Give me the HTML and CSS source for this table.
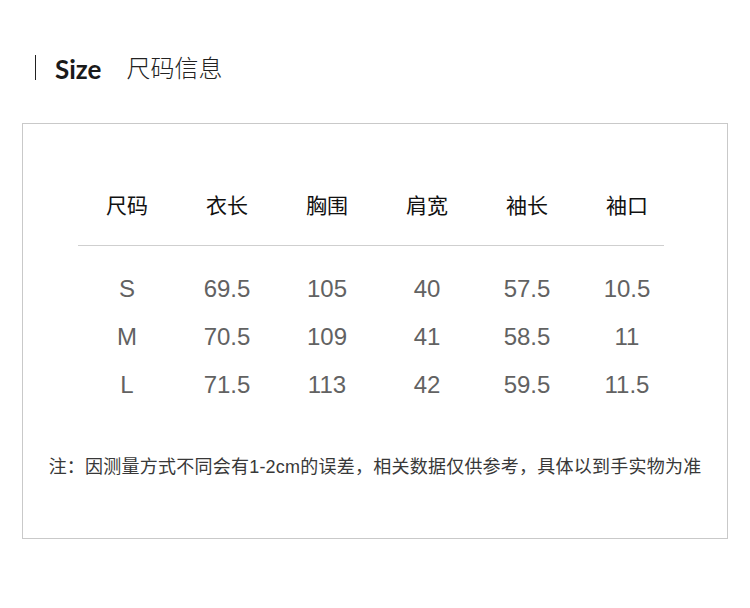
FILE: index.html
```html
<!DOCTYPE html>
<html lang="zh-CN">
<head>
<meta charset="utf-8">
<link rel="stylesheet" href="styles.css">
</head>
<body>
<div class="title">
  <span class="bar"></span>
  <span class="size">Size</span>
  <span class="cn">尺码信息</span>
</div>
<div class="box">
  <div class="grid head">
    <div>尺码</div><div>衣长</div><div>胸围</div><div>肩宽</div><div>袖长</div><div>袖口</div>
  </div>
  <div class="rule"></div>
  <div class="grid row"><div>S</div><div>69.5</div><div>105</div><div>40</div><div>57.5</div><div>10.5</div></div>
  <div class="grid row"><div>M</div><div>70.5</div><div>109</div><div>41</div><div>58.5</div><div>11</div></div>
  <div class="grid row"><div>L</div><div>71.5</div><div>113</div><div>42</div><div>59.5</div><div>11.5</div></div>
  <p class="note">注：因测量方式不同会有1-2cm的误差，相关数据仅供参考，具体以到手实物为准</p>
</div>
</body>
</html>
```

FILE: styles.css
```css
html, body {
  margin: 0;
  padding: 0;
  background: #fff;
}
body {
  width: 750px;
  height: 608px;
  font-family: "Noto Sans CJK SC", "Liberation Sans", sans-serif;
}
.title {
  display: flex;
  align-items: center;
  height: 26px;
  margin: 54px 0 0 35px;
}
.bar {
  width: 1px;
  height: 25px;
  background: #222;
  margin-right: 19px;
}
.size {
  font-family: "Lato", "Noto Sans", sans-serif;
  font-weight: 700;
  font-size: 26px;
  color: #1a1a1a;
  line-height: 26px;
  margin-top: 4px;
}
.cn {
  font-family: "Noto Sans CJK SC", sans-serif;
  font-weight: 300;
  font-size: 24px;
  color: #222;
  margin-left: 25px;
  line-height: 26px;
}
.box {
  margin: 43px 0 0 22px;
  width: 704px;
  height: 414px;
  border: 1px solid #c9c9c9;
}
.grid {
  display: grid;
  grid-template-columns: repeat(6, 100px);
  margin-left: 54px;
  text-align: center;
}
.head {
  margin-top: 60px;
  height: 40px;
  line-height: 40px;
  font-family: "Noto Sans CJK SC", sans-serif;
  font-size: 21px;
  color: #111;
}
.rule {
  margin: 21px 0 0 55px;
  width: 586px;
  height: 1px;
  background: #cfcfcf;
}
.row {
  height: 48px;
  line-height: 48px;
  font-family: "Liberation Sans", Arial, sans-serif;
  font-size: 24px;
  color: #626262;
}
.rule + .row {
  margin-top: 19px;
}
.note {
  margin: 46px 0 0;
  text-align: center;
  font-family: "Liberation Sans", "Noto Sans CJK SC", sans-serif;
  font-size: 18px;
  line-height: 24px;
  letter-spacing: 0.23px;
  color: #383838;
  white-space: nowrap;
}
```
